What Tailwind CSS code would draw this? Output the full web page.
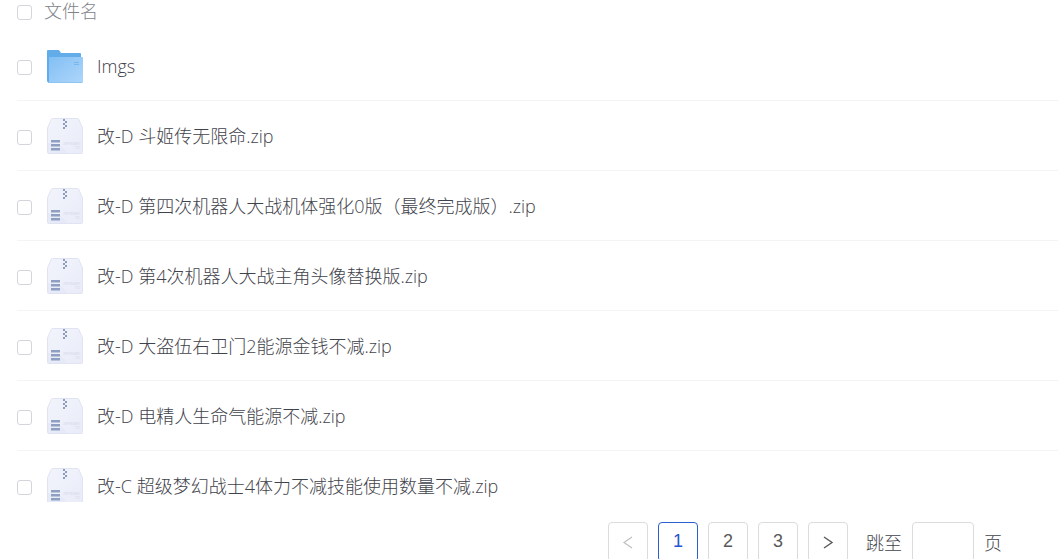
<!DOCTYPE html>
<html lang="zh-CN">
<head>
  <meta charset="UTF-8">
  <meta name="viewport" content="width=device-width, initial-scale=1.0">
  <title>文件列表</title>
  <script src="https://cdn.jsdelivr.net/npm/@tailwindcss/browser@4"></script>
</head>
<body class="h-screen flex flex-col overflow-hidden bg-white text-[#3f434b] text-[18px] font-light font-['Open_Sans','Noto_Sans_CJK_SC',sans-serif]">

  <div class="shrink-0 h-[31px] pb-2 pl-[17px] flex items-center gap-3 text-[#7f828a]">
    <input id="all" type="checkbox" class="appearance-none size-[15px] mt-0.5 bg-white border border-[#d3d5da] rounded-[3px] checked:bg-blue-600">
    <label for="all">文件名</label>
  </div>

  <ul class="flex-1 min-h-0 overflow-hidden ml-[17px]">
    <li class="h-[70px] flex items-center border-b border-[#f3f4f6]">
      <input id="f1" type="checkbox" class="appearance-none size-[15px] mt-1 bg-white border border-[#d3d5da] rounded-[3px] checked:bg-blue-600">
      <svg class="size-9 ml-[15px] mr-3.5" viewBox="0 0 36 36">
        <linearGradient id="folderFront" x1="0" y1="0" x2="1" y2="1">
          <stop offset="0" stop-color="#82bff4"/>
          <stop offset="1" stop-color="#aed6fb"/>
        </linearGradient>
        <path d="M0 3a1 1 0 0 1 1-1h10.500a1 1 0 0 1 .8.400L14 5h19a1 1 0 0 1 1 1v28H1a1 1 0 0 1-1-1z" fill="#62ace9"/>
        <path d="M2 10a1 1 0 0 1 1-1h32a1 1 0 0 1 1 1v24a1 1 0 0 1-1 1H2z" fill="url(#folderFront)"/>
        <path d="M1 34.500h34" stroke="#8cc4f4"/>
        <path d="M27 14.500h5M27 16.500h5" stroke="#78b7ee"/>
      </svg>
      <label for="f1" class="pt-0.5">Imgs</label>
    </li>
    <li class="h-[70px] flex items-center border-b border-[#f3f4f6]">
      <input id="f2" type="checkbox" class="appearance-none size-[15px] mt-1 bg-white border border-[#d3d5da] rounded-[3px] checked:bg-blue-600">
      <!-- archive icon, reused by the rows below -->
      <svg class="size-9 ml-[15px] mr-3.5" viewBox="0 0 36 36">
        <linearGradient id="zipBody" x1="0" y1="0" x2="1" y2="1">
          <stop offset="0" stop-color="#f2f4fc"/>
          <stop offset="1" stop-color="#e9ebf8"/>
        </linearGradient>
        <g id="zip">
          <path d="M4.300 1.200Q4.600.5 5.400.5h25.200q.8 0 1.100.7L35.500 10v24.500a1 1 0 0 1-1 1h-33a1 1 0 0 1-1-1V10z" fill="url(#zipBody)" stroke="#e0e3f1"/>
          <path d="M1 25Q14 24 20 35H1z" fill="#e3e6f5" opacity=".6"/>
          <path d="M16 1h2v2h-2zM18 3h2v2h-2zM16 5h2v2h-2zM18 7h2v2h-2zM16 9h2v2h-2z" fill="#8f9dbd"/>
          <path d="M4 22h9v2.500H4zM4 26h9v2.500H4zM4 30h9v2.500H4z" fill="#8f9fc1"/>
          <text x="16" y="27" font-size="4" font-weight="700" fill="#dcdfed" font-family="Liberation Sans">ZIP/RAR/</text>
          <text x="28" y="31" font-size="4" font-weight="700" fill="#dcdfed" font-family="Liberation Sans">7Z</text>
        </g>
      </svg>
      <label for="f2" class="pt-0.5">改-D 斗姬传无限命.zip</label>
    </li>
    <li class="h-[70px] flex items-center border-b border-[#f3f4f6]">
      <input id="f3" type="checkbox" class="appearance-none size-[15px] mt-1 bg-white border border-[#d3d5da] rounded-[3px] checked:bg-blue-600">
      <svg class="size-9 ml-[15px] mr-3.5" viewBox="0 0 36 36"><use href="#zip"/></svg>
      <label for="f3" class="pt-0.5">改-D 第四次机器人大战机体强化0版（最终完成版）.zip</label>
    </li>
    <li class="h-[70px] flex items-center border-b border-[#f3f4f6]">
      <input id="f4" type="checkbox" class="appearance-none size-[15px] mt-1 bg-white border border-[#d3d5da] rounded-[3px] checked:bg-blue-600">
      <svg class="size-9 ml-[15px] mr-3.5" viewBox="0 0 36 36"><use href="#zip"/></svg>
      <label for="f4" class="pt-0.5">改-D 第4次机器人大战主角头像替换版.zip</label>
    </li>
    <li class="h-[70px] flex items-center border-b border-[#f3f4f6]">
      <input id="f5" type="checkbox" class="appearance-none size-[15px] mt-1 bg-white border border-[#d3d5da] rounded-[3px] checked:bg-blue-600">
      <svg class="size-9 ml-[15px] mr-3.5" viewBox="0 0 36 36"><use href="#zip"/></svg>
      <label for="f5" class="pt-0.5">改-D 大盗伍右卫门2能源金钱不减.zip</label>
    </li>
    <li class="h-[70px] flex items-center border-b border-[#f3f4f6]">
      <input id="f6" type="checkbox" class="appearance-none size-[15px] mt-1 bg-white border border-[#d3d5da] rounded-[3px] checked:bg-blue-600">
      <svg class="size-9 ml-[15px] mr-3.5" viewBox="0 0 36 36"><use href="#zip"/></svg>
      <label for="f6" class="pt-0.5">改-D 电精人生命气能源不减.zip</label>
    </li>
    <li class="h-[70px] flex items-center border-b border-[#f3f4f6]">
      <input id="f7" type="checkbox" class="appearance-none size-[15px] mt-1 bg-white border border-[#d3d5da] rounded-[3px] checked:bg-blue-600">
      <svg class="size-9 ml-[15px] mr-3.5" viewBox="0 0 36 36"><use href="#zip"/></svg>
      <label for="f7" class="pt-0.5">改-C 超级梦幻战士4体力不减技能使用数量不减.zip</label>
    </li>
  </ul>

  <!-- pagination -->
  <nav class="shrink-0 h-[57px] pt-5 pr-14 flex items-start justify-end gap-2.5">
    <button aria-label="上一页" disabled class="size-10 flex items-center justify-center border border-[#dcdcdc] rounded text-[#bfbfbf]">
      <svg class="size-4" viewBox="0 0 16 16" fill="none" stroke="currentColor" stroke-width="1.200"><path d="M12 3 4 8.500 12 14"/></svg>
    </button>
    <button class="size-10 pb-0.5 border border-[#2b5fd0] rounded font-normal font-['Liberation_Sans',sans-serif] text-[#1f55d0]">1</button>
    <button class="size-10 pb-0.5 border border-[#dcdcdc] rounded font-normal font-['Liberation_Sans',sans-serif] text-[#595959]">2</button>
    <button class="size-10 pb-0.5 border border-[#dcdcdc] rounded font-normal font-['Liberation_Sans',sans-serif] text-[#595959]">3</button>
    <button aria-label="下一页" class="size-10 flex items-center justify-center border border-[#dcdcdc] rounded text-[#595959]">
      <svg class="size-4" viewBox="0 0 16 16" fill="none" stroke="currentColor" stroke-width="1.400"><path d="M4 3 12 8.500 4 14"/></svg>
    </button>
    <label for="page" class="ml-2 leading-[42px]">跳至</label>
    <input id="page" type="text" class="w-[62px] h-10 px-3 border border-[#dcdcdc] rounded">
    <span class="leading-[42px]">页</span>
  </nav>

</body>
</html>
